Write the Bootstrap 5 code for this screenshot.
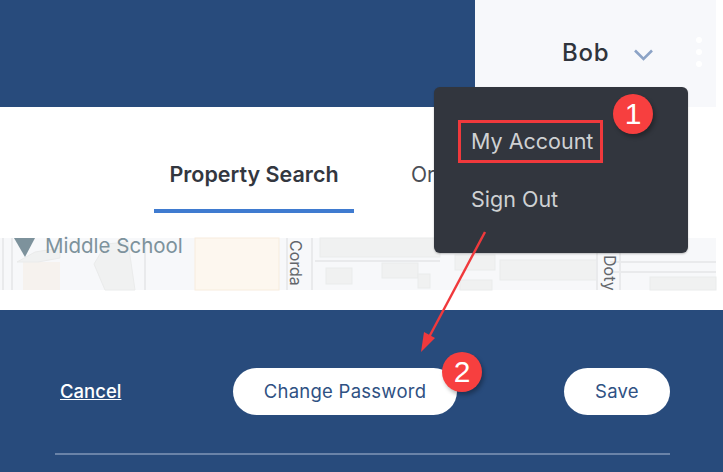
<!DOCTYPE html>
<html lang="en">
<head>
<meta charset="utf-8">
<title>Account</title>
<link href="https://cdn.jsdelivr.net/npm/bootstrap@5.3.0/dist/css/bootstrap.min.css" rel="stylesheet">
<style>
html,body{width:723px;height:472px;overflow:hidden;margin:0;background:#fff;}
body{font-family:Inter,"Liberation Sans",sans-serif;}
.stage{position:relative;width:723px;height:472px;overflow:hidden;}
.topbar{height:107px;background:#284b7c;}
.userbox{width:241px;margin-left:auto;background:#f7f8fb;padding-left:87px;padding-top:38px;color:#30343c;font-size:24px;font-weight:500;line-height:29px;letter-spacing:.7px;}
.whiteedge{width:7px;background:#fff;}
.chev{margin-left:23px;margin-top:9px;flex:none;}
.dotcol{margin-left:42px;margin-top:-1px;gap:6px;}
.dotcol span{width:6px;height:6px;border-radius:50%;background:#fff;display:block;}
.tabrow{height:131px;background:#fff;padding-left:154px;padding-top:51px;}
.tabitem{width:200px;height:55px;text-align:center;font-weight:600;line-height:33px;color:#33373f;border-bottom:4px solid #3f7bd0;font-size:21.5px;}
.tabnext{margin-left:57px;font-size:21px;line-height:33px;color:#4a4e55;}
.mapstrip{height:52px;width:716px;display:block;overflow:visible;}
.gapstrip{height:20px;background:#fff;}
.bottombar{height:162px;background:#284b7c;padding:58px 53px 0 60px;}
.cancel-link{color:#fff;font-size:18.5px;font-weight:500;text-decoration:underline;width:173px;}
.pillbtn{background:#fff;color:#2f5183;border:0;border-radius:24px;height:47px;font-size:18.5px;padding:0;letter-spacing:.25px;}
.pw{width:224px;}
.sv{width:106px;margin-left:107px;}
.rule{height:2px;background:#6a83a8;margin:38px 0 0 -5px;}
.ddmenu{position:absolute;left:434px;top:87px;width:254px;height:166px;background:#32363e;border-radius:6px;padding:37px 0 0 37px;color:#cfd1d3;font-size:21.5px;line-height:34px;box-shadow:0 1px 2px rgba(0,0,0,.25);}
.ddmenu div+div{margin-top:24px;}
.redbox{position:absolute;left:458px;top:120px;width:145px;height:43px;border:3px solid #f0393c;}
.numdot{position:absolute;width:40px;height:40px;border-radius:50%;background:#f73f3f;color:#fff;font-family:"Liberation Sans",sans-serif;font-size:30px;line-height:40px;text-align:center;box-shadow:2px 3px 4px rgba(0,0,0,.3);}
.n1{left:613px;top:94px;}
.n2{left:442px;top:352px;}
.arrowlayer{position:absolute;left:0;top:0;pointer-events:none;}
.maplabel{font-family:Inter,"Liberation Sans",sans-serif;fill:#7d929c;font-size:20.5px;}
.roadlabel{font-family:Inter,"Liberation Sans",sans-serif;fill:#62656a;font-size:16px;}
</style>
</head>
<body>
<div class="stage">
  <div class="topbar d-flex">
    <div class="userbox d-flex align-items-start">
      <span>Bob</span>
      <svg class="chev" width="22" height="16" viewBox="0 0 22 16"><path d="M3 3.5l8.5 8.5L20 3.5" fill="none" stroke="#8ca3c6" stroke-width="2.6"/></svg>
      <div class="dotcol d-flex flex-column"><span></span><span></span><span></span></div>
    </div>
    <div class="whiteedge"></div>
  </div>
  <div class="tabrow d-flex">
    <div class="tabitem">Property Search</div>
    <div class="tabnext">Or</div>
  </div>
  <svg class="mapstrip" viewBox="0 0 716 52" aria-label="Map">
    <rect width="716" height="52" fill="#f7f8fa"/>
    <path d="M23 52V24h37v28z" fill="#f6f2ee"/>
    <g fill="#f0f1f1" stroke="#eaebeb">
      <path d="M17 24l18-10 25-4v10l-22 4z"/>
      <path d="M94 26l12-20 22-2 7 48-30 0z"/>
      <rect x="320" y="0" width="120" height="19"/>
      <rect x="326" y="30" width="26" height="16"/>
      <rect x="382" y="25" width="36" height="15"/>
      <rect x="418" y="36" width="12" height="14"/>
      <rect x="455" y="17" width="40" height="15"/>
      <rect x="460" y="42" width="32" height="10"/>
      <rect x="500" y="22" width="97" height="20"/>
      <rect x="650" y="39" width="66" height="13"/>
    </g>
    <rect x="195" y="0" width="84" height="52" fill="#fdf7ef" stroke="#f7ecdd"/>
    <path d="M3 0v52M12 0v52M145 0v52M287 0v52M312 0v52M315 23h125M597 0v52M620 0v52M610 24h106M610 34h106" stroke="#e9eaec" stroke-width="2" fill="none"/>
    <path d="M14 0h21L25 19z" fill="#7d929c"/>
    <text class="maplabel" x="45" y="15">Middle School</text>
    <text class="roadlabel" transform="rotate(90 290 2)" x="290" y="2">Corda</text>
    <text class="roadlabel" transform="rotate(90 604 17)" x="604" y="17">Doty</text>
  </svg>
  <div class="gapstrip"></div>
  <div class="bottombar">
    <div class="d-flex align-items-center">
      <a class="cancel-link" href="#">Cancel</a>
      <button class="btn pillbtn pw" type="button">Change Password</button>
      <button class="btn pillbtn sv" type="button">Save</button>
    </div>
    <div class="rule"></div>
  </div>

  <div class="ddmenu">
    <div>My Account</div>
    <div>Sign Out</div>
  </div>
  <div class="redbox"></div>
  <svg class="arrowlayer" width="723" height="472" viewBox="0 0 723 472">
    <line x1="485" y1="232" x2="427" y2="341" stroke="#f0393c" stroke-width="2.4"/>
    <path d="M421 352l3-20 11 6z" fill="#f0393c"/>
  </svg>
  <div class="numdot n1">1</div>
  <div class="numdot n2">2</div>
</div>
<script src="https://cdn.jsdelivr.net/npm/bootstrap@5.3.0/dist/js/bootstrap.bundle.min.js"></script>
</body>
</html>
